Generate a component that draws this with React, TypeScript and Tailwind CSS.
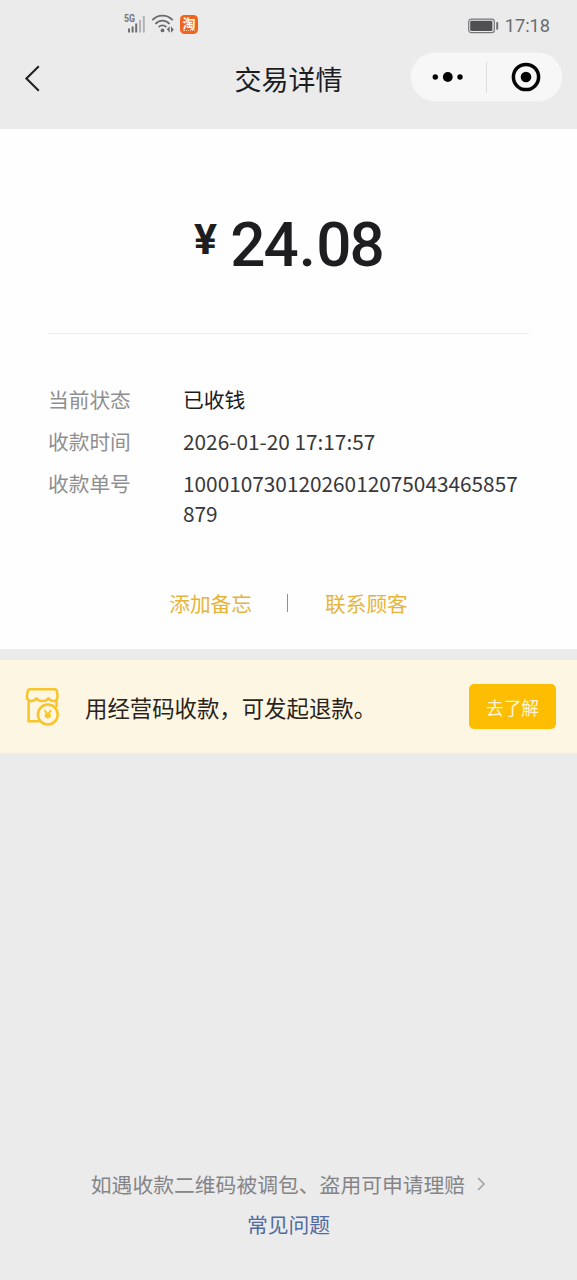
import React from 'react';

interface DetailRowProps {
  label: string;
  children: React.ReactNode;
  valueClass?: string;
}

const DetailRow: React.FC<DetailRowProps> = ({ label, children, valueClass = 'text-[#38383b]' }) => (
  <div className="flex items-start leading-[30px] text-[20.8px]">
    <dt className="w-[135px] shrink-0 text-[20.7px] text-[#8f8f91]">{label}</dt>
    <dd className={`w-[341px] break-all ${valueClass}`}>{children}</dd>
  </div>
);

const StatusBar = () => (
  <div className="flex h-[50px] items-start justify-between pl-[123px] pr-[27px] pt-[12px]">
    <div className="flex items-start">
      {/* 5G signal */}
      <svg width="24" height="24" viewBox="0 0 24 24">
        <text x="1" y="10" fontSize="10.5" fontWeight="700" textLength="11" lengthAdjust="spacingAndGlyphs" fontFamily="Roboto, sans-serif" fill="#767678">5G</text>
        <g fill="#6f6f71">
          <rect x="5" y="16.5" width="2" height="4" />
          <rect x="8.6" y="14.5" width="2" height="6" />
          <rect x="12.2" y="11.5" width="2" height="9" />
          <rect x="16" y="8" width="2" height="12.5" fill="#b3b3b5" />
          <rect x="19.8" y="4" width="2" height="16.5" fill="#b3b3b5" />
        </g>
      </svg>
      {/* Wi-Fi with traffic arrows */}
      <svg className="ml-[4px]" width="25" height="24" viewBox="0 0 25 24" fill="none" stroke="#6b6b6d" strokeWidth="1.8">
        <path d="M1.3 8.2 A13.5 13.5 0 0 1 21.7 8.2" />
        <path d="M4.5 12 A9 9 0 0 1 18.5 12" />
        <path d="M7.7 15.2 A5 5 0 0 1 15.3 15.2" />
        <circle cx="11.5" cy="18.4" r="1.9" fill="#6b6b6d" stroke="none" />
        <path d="M18.7 14.2 V20.8 L15.8 17.2 Z M20 14.2 V20.8 L22.8 17.8 Z" fill="#6b6b6d" stroke="none" />
      </svg>
      {/* Taobao */}
      <div className="ml-[4px] mt-[3px] flex h-[19px] w-[18px] flex-col items-center rounded-[4.5px] bg-[#f0641e]">
        <span className="text-[13px] font-bold leading-[15px] text-[#fff6ee]">淘</span>
        <span className="w-[12px] border-t border-dotted border-[#ffc5a0]" />
      </div>
    </div>
    <div className="flex items-center pt-[2px]">
      <svg width="31" height="16" viewBox="0 0 31 16">
        <rect x="0.7" y="1.2" width="25.6" height="13.4" rx="2.6" fill="none" stroke="#77777a" strokeWidth="1.2" />
        <rect x="2.2" y="2.7" width="22.2" height="10.4" rx="1.4" fill="#505052" />
        <rect x="28.2" y="4" width="2" height="7.8" rx="0.8" fill="#707072" />
      </svg>
      <span className="ml-[6px] font-['Roboto',sans-serif] text-[18.2px] leading-[24px] text-[#6c6c6e]">17:18</span>
    </div>
  </div>
);

const NavBar = () => (
  <header className="grid h-[79px] grid-cols-[1fr_auto_1fr] items-start">
    <button className="ml-[24px] mt-[15px] w-[18px]" aria-label="返回">
      <svg width="18" height="28" viewBox="0 0 18 28" fill="none" stroke="#222224" strokeWidth="2.1">
        <path d="M14.8 1.2 L2.4 13.5 L14.8 25.8" />
      </svg>
    </button>
    <h1 className="mt-[9px] text-[27px] leading-[40px] text-[#1d1d1f]">交易详情</h1>
    <div className="mr-[14px] mt-[2px] flex h-[50px] w-[153px] items-center justify-self-end rounded-full border border-[#f0f0f0] bg-[#f7f7f7]">
      <button className="flex w-[75px] justify-center pr-[2px]" aria-label="更多">
        <svg width="32" height="12" viewBox="0 0 32 12" fill="#050505">
          <circle cx="3.3" cy="6" r="2.7" />
          <circle cx="15.8" cy="6" r="4.9" />
          <circle cx="28" cy="6" r="2.7" />
        </svg>
      </button>
      <span className="h-[31px] w-px bg-[#dddddd]" />
      <button className="flex flex-1 justify-center pl-[3px]" aria-label="关闭">
        <svg width="30" height="30" viewBox="0 0 30 30">
          <circle cx="15" cy="15" r="12.6" fill="none" stroke="#050505" strokeWidth="3.5" />
          <circle cx="15" cy="15" r="5.3" fill="#050505" />
        </svg>
      </button>
    </div>
  </header>
);

const ShopIcon = () => (
  <svg width="36" height="40" viewBox="0 0 36 40" fill="none" stroke="#f8c42c" strokeWidth="2.5" strokeLinejoin="round" strokeLinecap="round">
    <path d="M5 2.3 H29.5 Q31.6 2.3 31.9 4.5 L32.6 9.5 Q32.5 13 29.5 14 Q25.8 14.5 23.5 11.3 Q21.5 14.2 17.2 14 Q13.3 14 11.3 11.3 Q9.5 14.2 5.7 14 Q2 13.3 1.8 9.5 L2.7 4.5 Q3 2.3 5 2.3 Z" />
    <path d="M3.6 14 V34.2 H13 M31.5 13.5 V19" />
    <circle cx="22.8" cy="27.5" r="9.9" />
    <path d="M20 23.8 L22.8 27.7 L25.6 23.8 M22.8 27.5 V30.8 M20.6 27.7 H25 M20.6 29.5 H25" strokeWidth="1.9" />
  </svg>
);

export default function App() {
  return (
    <div className="flex h-[1280px] w-[577px] flex-col overflow-hidden bg-[#ebebec] font-['Noto_Sans_CJK_SC',sans-serif]">
      <StatusBar />
      <NavBar />

      <main className="flex h-[520px] flex-col bg-[#fefefe] px-[48px]">
        {/* Amount */}
        <div className="flex h-[205px] items-start justify-center border-b border-[#ececee] font-['Roboto',sans-serif] font-medium text-[#1e1e20]">
          <span className="mt-[85px] text-[43px] font-bold leading-[50px]">¥</span>
          <span className="ml-[13px] mt-[79px] flex text-[62px] leading-[74px] tracking-[-1.9px]">
            <span>24</span>
            <span className="mx-[2px]">.</span>
            <span>08</span>
          </span>
        </div>

        <dl className="mt-[50px] flex flex-col gap-[12px]">
          <DetailRow label="当前状态" valueClass="text-[#1c1c1f]">已收钱</DetailRow>
          <DetailRow label="收款时间">2026-01-20 17:17:57</DetailRow>
          <DetailRow label="收款单号">10001073012026012075043465857879</DetailRow>
        </dl>

        <div className="mt-[60px] flex items-center justify-center text-[20.7px] leading-[30px] text-[#e6b43c]">
          <button>添加备忘</button>
          <span className="ml-[35px] mr-[37px] h-[18px] w-px bg-[#909092]" />
          <button>联系顾客</button>
        </div>
      </main>

      {/* Refund notice */}
      <section className="mt-[11px] flex h-[93px] items-center bg-[#fdf6e3] pl-[25px] pr-[21px]">
        <ShopIcon />
        <p className="ml-[24px] flex-1 text-[22.4px] leading-[32px] text-[#29231c]">用经营码收款，可发起退款。</p>
        <button className="h-[45px] w-[87px] rounded-[5px] bg-[#fdbd02] pt-[1px] text-[17.7px] text-[#fff6da]">去了解</button>
      </section>

      <footer className="mt-auto flex flex-col items-center pb-[41px] text-[20.8px] leading-[30px]">
        <a className="flex items-center text-[#858587]">
          如遇收款二维码被调包、盗用可申请理赔
          <svg className="ml-[12px]" width="9" height="14" viewBox="0 0 9 14" fill="none" stroke="#a0a0a2" strokeWidth="1.5">
            <path d="M1 1 L7 7 L1 13" />
          </svg>
        </a>
        <a className="mt-[10px] text-[#526c9f]">常见问题</a>
      </footer>
    </div>
  );
}
